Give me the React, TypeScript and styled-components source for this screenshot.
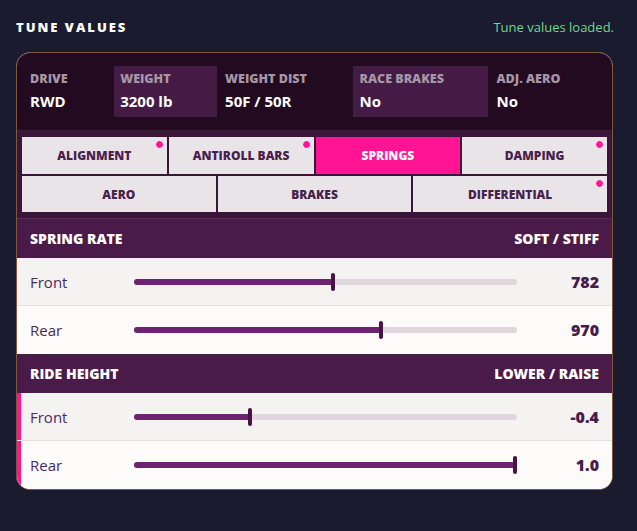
import React from 'react'
import styled, { createGlobalStyle } from 'styled-components'

const GlobalStyle = createGlobalStyle`
  html, body {
    margin: 0;
    padding: 0;
    background: #1a1b2e;
  }
  body {
    font-family: "Open Sans", "Noto Sans", sans-serif;
  }
`

type Stat = { label: string; value: string; hl?: boolean }
type Slider = { label: string; value: string; pct: number; changed?: boolean }
type Section = { title: string; hint: string; rows: Slider[] }

const stats: Stat[] = [
  { label: 'Drive', value: 'RWD' },
  { label: 'Weight', value: '3200 lb', hl: true },
  { label: 'Weight Dist', value: '50F / 50R' },
  { label: 'Race Brakes', value: 'No', hl: true },
  { label: 'Adj. Aero', value: 'No' },
]

const tabRows = [
  [
    { name: 'Alignment', dot: true },
    { name: 'Antiroll Bars', dot: true },
    { name: 'Springs', active: true },
    { name: 'Damping', dot: true },
  ],
  [
    { name: 'Aero' },
    { name: 'Brakes' },
    { name: 'Differential', dot: true },
  ],
]

const sections: Section[] = [
  {
    title: 'Spring Rate',
    hint: 'Soft / Stiff',
    rows: [
      { label: 'Front', value: '782', pct: 52 },
      { label: 'Rear', value: '970', pct: 64.4 },
    ],
  },
  {
    title: 'Ride Height',
    hint: 'Lower / Raise',
    rows: [
      { label: 'Front', value: '-0.4', pct: 30.4, changed: true },
      { label: 'Rear', value: '1.0', pct: 99.5, changed: true },
    ],
  },
]

const App = () => {
  return (
    <Page>
      <GlobalStyle />
      <TopBar>
        <Title>Tune Values</Title>
        <Status>Tune values loaded.</Status>
      </TopBar>
      <Card>
        <Stats>
          {stats.map((s) => (
            <StatCell key={s.label} $hl={s.hl}>
              <StatLabel>{s.label}</StatLabel>
              <StatValue>{s.value}</StatValue>
            </StatCell>
          ))}
        </Stats>
        <Tabs>
          {tabRows.map((row, i) => (
            <TabRow key={i} $cols={row.length}>
              {row.map((t: { name: string; dot?: boolean; active?: boolean }) => (
                <Tab key={t.name} $active={t.active} $h={i === 0 ? 37 : 36}>
                  {t.name}
                  {t.dot && <Dot />}
                </Tab>
              ))}
            </TabRow>
          ))}
        </Tabs>
        {sections.map((sec) => (
          <div key={sec.title}>
            <SectionHead>
              <span>{sec.title}</span>
              <span>{sec.hint}</span>
            </SectionHead>
            {sec.rows.map((r, i) => (
              <Row key={r.label} $alt={i % 2 === 1} $changed={r.changed}>
                <RowLabel>{r.label}</RowLabel>
                <Track>
                  <Fill style={{ width: r.pct + '%' }} />
                  <Thumb style={{ left: r.pct + '%' }} />
                </Track>
                <RowValue>{r.value}</RowValue>
              </Row>
            ))}
          </div>
        ))}
      </Card>
    </Page>
  )
}

export default App

const Page = styled.div`
  padding: 16px 16px 41px;
  width: 597px;
`
const TopBar = styled.div`
  display: flex;
  justify-content: space-between;
  align-items: center;
  height: 22px;
  margin-bottom: 14px;
`
const Title = styled.div`
  color: #ffffff;
  font-size: 13px;
  font-weight: 800;
  letter-spacing: 2px;
  text-transform: uppercase;
`
const Status = styled.div`
  color: #6fd88f;
  font-size: 13px;
  margin-right: -1px;
`
const Card = styled.div`
  border: 1px solid #80573c;
  border-radius: 14px;
  overflow: hidden;
  background: #fdfbfa;
`
const Stats = styled.div`
  display: flex;
  gap: 2px;
  padding: 13px 7px 13px;
  background: #220b21;
  border-bottom: 1px solid #3e2138;
`
const StatCell = styled.div<{ $hl?: boolean }>`
  flex: 1 1 auto;
  padding: 5px 6px 6px;
  background: ${(p) => (p.$hl ? '#431b45' : 'transparent')};
`
const StatLabel = styled.div`
  color: #a696a6;
  font-size: 12.5px;
  font-weight: 800;
  text-transform: uppercase;
  line-height: 16px;
`
const StatValue = styled.div`
  color: #ffffff;
  font-size: 15px;
  font-weight: 700;
  line-height: 20px;
  margin-top: 4px;
`
const Tabs = styled.div`
  display: flex;
  flex-direction: column;
  gap: 2px;
  padding: 6px 5px;
  background: #3b1439;
  border-bottom: 1px solid #54304e;
`
const TabRow = styled.div<{ $cols: number }>`
  display: grid;
  grid-template-columns: repeat(${(p) => p.$cols}, 1fr);
  gap: 2px;
`
const Tab = styled.div<{ $active?: boolean; $h: number }>`
  position: relative;
  height: ${(p) => p.$h}px;
  display: flex;
  align-items: center;
  justify-content: center;
  background: ${(p) => (p.$active ? '#ff1493' : '#e8e4e8')};
  color: ${(p) => (p.$active ? '#ffffff' : '#4a1f4b')};
  font-size: 12px;
  font-weight: 800;
  text-transform: uppercase;
`
const Dot = styled.span`
  position: absolute;
  top: 3px;
  right: 3px;
  width: 7px;
  height: 7px;
  border-radius: 50%;
  background: #ff1493;
  border: 1.5px solid #ffffff;
`
const SectionHead = styled.div`
  display: flex;
  justify-content: space-between;
  align-items: center;
  height: 39px;
  padding: 0 13px;
  background: #4a1a48;
  color: #ffffff;
  font-size: 14px;
  font-weight: 800;
  text-transform: uppercase;
`
const Row = styled.div<{ $alt?: boolean; $changed?: boolean }>`
  display: flex;
  align-items: center;
  height: ${(p) => (p.$alt ? 48 : 47)}px;
  padding: 0 13px;
  background: ${(p) => (p.$alt ? '#fdfbfa' : '#f5f2f2')};
  border-bottom: ${(p) => (p.$alt ? 'none' : '1px solid #e6e0e0')};
  box-shadow: ${(p) => (p.$changed ? 'inset 4px 0 0 #ff1493' : 'none')};
`
const RowLabel = styled.div`
  width: 104px;
  color: #4a2a5e;
  font-size: 15px;
`
const Track = styled.div`
  position: relative;
  flex: 1;
  height: 6px;
  border-radius: 3px;
  background: #e0d6de;
`
const Fill = styled.div`
  height: 100%;
  border-radius: 3px;
  background: #6e2370;
`
const Thumb = styled.div`
  position: absolute;
  top: -6px;
  width: 4px;
  height: 18px;
  margin-left: -2px;
  border-radius: 2px;
  background: #4a1048;
`
const RowValue = styled.div`
  width: 82px;
  text-align: right;
  color: #4a1a4a;
  font-size: 16px;
  font-weight: 800;
`
